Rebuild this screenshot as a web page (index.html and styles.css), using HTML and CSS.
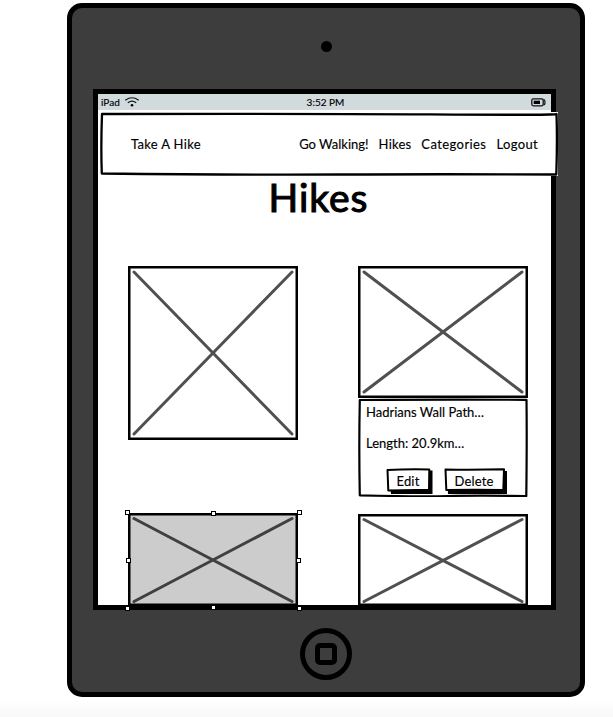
FILE: index.html
```html
<!DOCTYPE html>
<html lang="en">
<head>
<meta charset="utf-8">
<title>Take A Hike</title>
<link rel="stylesheet" href="styles.css">
</head>
<body>
<div class="tablet">
  <div class="bezel"><span class="camera"></span></div>
  <main class="screen">
    <div class="status">
      <div class="carrier"><span class="device">iPad</span>
        <svg width="14" height="10" viewBox="0 0 14 10" fill="none" stroke="#111" stroke-width="1.2" stroke-linecap="round"><path d="M.7 3Q7-1.5 13.3 3M3.2 5.5Q7 2.700 10.800 5.500"/><circle cx="7" cy="8.300" r="1.300" fill="#000" stroke="none"/></svg>
      </div>
      <span class="time">3:52 PM</span>
      <svg class="battery" width="15" height="9" viewBox="0 0 15 9"><rect x=".8" y=".8" width="11.400" height="7" rx="1.500" fill="none" stroke="#111" stroke-width="1.300"/><path d="M12.500 1.500Q14 1.700 14 4.300T12.500 7" fill="none" stroke="#111" stroke-width="1.200"/><rect x="2.700" y="2.700" width="6.300" height="3.300" fill="#000"/></svg>
    </div>
    <nav class="nav">
      <svg class="sketch" width="458" height="65" viewBox="0 0 458 65"><path d="M0 0H458V64H2Q0 64 0 62Z" fill="#fff"/><path d="M2 2Q200 1.500 330 2.400T456.500 2Q457.400 28 456.300 62.500Q340 62 240 62.500T1.800 61.500Q.8 35 2 2Z" fill="none" stroke="#000" stroke-width="2.300" stroke-linejoin="round"/></svg>
      <a class="brand">Take A Hike</a>
      <div class="links"><a class="walk">Go Walking!</a><a class="hikes">Hikes</a><a class="cats">Categories</a><a class="logout">Logout</a></div>
    </nav>
    <h1>Hikes</h1>
    <section class="gallery">
      <div class="column">
        <svg class="photo tall" width="170" height="174" viewBox="0 0 170 174"><rect class="frame" x="1.250" y="1.250" width="167.500" height="171.500"/><path class="cross" d="M6 6L164 168M164 6L6 168"/></svg>
        <div class="selected">
          <svg class="photo" width="170" height="93" viewBox="0 0 170 93"><rect class="frame fill" x="1.250" y="1.250" width="167.500" height="90.500"/><path class="cross dark" d="M6 5.500L164 88.500M164 5.500L6 88.500"/></svg>
          <i class="handle nw"></i><i class="handle n"></i><i class="handle ne"></i>
          <i class="handle w"></i><i class="handle e"></i>
          <i class="handle sw"></i><i class="handle s"></i><i class="handle se"></i>
        </div>
      </div>
      <div class="column">
        <svg class="photo" width="170" height="132" viewBox="0 0 170 132"><rect class="frame" x="1.250" y="1.250" width="167.500" height="129.500"/><path class="cross" d="M6 6L164 126M164 6L6 126"/></svg>
        <article class="card">
          <svg class="sketch" width="170" height="99" viewBox="0 0 170 99"><path d="M1.800 2Q80 1.400 168.500 1.800Q169 40 168.300 98Q120 97.300 90 98T1.800 97.300Q.8 50 1.800 2Z" fill="#fff" stroke="#000" stroke-width="2.200" stroke-linejoin="round"/></svg>
          <p class="name">Hadrians Wall Path…</p>
          <p class="length">Length: 20.9km…</p>
          <div class="actions">
            <button class="edit"><svg class="sketch" width="48" height="27" viewBox="0 0 48 27"><path d="M3 4L43 2.500H46.500V26H5Z"/><path class="face" d="M1.500 2Q22 1 43.300 1.500L43 22Q20 21.700 2.300 22.500Z"/></svg><span>Edit</span></button>
            <button class="delete"><svg class="sketch" width="64" height="27" viewBox="0 0 64 27"><path d="M3 4L60 3H63V26H4Z"/><path class="face" d="M1.500 1.500Q28 2 60 1.300L59.300 22Q30 21.500 2.300 22Z"/></svg><span>Delete</span></button>
          </div>
        </article>
        <svg class="photo last" width="170" height="92" viewBox="0 0 170 92"><rect class="frame" x="1.250" y="1.250" width="167.500" height="89.500"/><path class="cross" d="M6 5.500L164 87.500M164 5.500L6 87.500"/></svg>
      </div>
    </section>
  </main>
  <div class="home"><span></span></div>
</div>
</body>
</html>
```
FILE: styles.css
```css
* { box-sizing: border-box; }
body { margin: 0; height: 717px; overflow: hidden; padding: 3px 0 0 67px; background: linear-gradient(#fff 700px, #f8f8f8 717px); color: #000; font: 13px/16px Lato, "Liberation Sans", sans-serif; -webkit-text-stroke: .15px #000; white-space: nowrap; }
svg { display: block; flex: none; }
.tablet { width: 518px; height: 694px; border: 5px solid #000; border-radius: 15px; background: #3d3d3d; }
.bezel { height: 81px; padding: 32.5px 0 0 248.5px; }
.camera { display: block; width: 11px; height: 11px; border-radius: 50%; background: #000; }
.screen { width: 463px; height: 521px; margin-left: 21px; border: 5px solid #000; background: #fff; }
.status { display: grid; grid-template-columns: 1fr auto 1fr; align-items: center; height: 16px; padding: 0 5px 0 3px; background: #d1dadd; font-size: 10px; line-height: 14px; }
.carrier { display: flex; gap: 5px; align-items: center; }
.device, .time { padding-bottom: 1px; }
.time { position: relative; left: 2px; }
.battery { justify-self: end; }
.nav { position: relative; display: flex; justify-content: space-between; align-items: center; width: 458px; height: 65px; margin: 2px 0 0 2px; padding: 0 20px 2px 31px; }
.sketch { position: absolute; inset: 0; }
.nav a, .nav .links { position: relative; }
.brand { letter-spacing: .32px; }
.links { display: flex; gap: 10px; }
.walk { letter-spacing: 0; }
.hikes { letter-spacing: .2px; }
.cats { letter-spacing: .42px; }
.logout { letter-spacing: .35px; }
h1 { margin: -1px 0 0; padding-right: 12px; height: 78px; text-align: center; font-size: 39px; line-height: 43px; font-weight: 400; -webkit-text-stroke: 1.1px #000; letter-spacing: 1px; }
.gallery { display: flex; gap: 60px; padding-left: 30px; margin-top: 12px; }
.column { width: 170px; }
.frame { fill: #fff; stroke: #000; stroke-width: 2.5; }
.fill { fill: #ccc; }
.cross { fill: none; stroke: #505050; stroke-width: 3; stroke-linecap: round; }
.dark { stroke: #404040; }
.selected { position: relative; margin-top: 73px; }
.handle { position: absolute; width: 5px; height: 5px; border: 1px solid #000; background: #fff; }
.nw, .sw { left: -3px; }
.ne, .se { left: 169px; }
.n, .s { left: 83px; }
.w { left: -2px; }
.e { left: 168px; }
.nw, .ne { top: -3px; }
.n { top: -2px; }
.w, .e { top: 45px; }
.sw, .se { top: 93px; }
.s { top: 92px; }
.card { position: relative; height: 99px; padding: 6px 8px; }
.card p { position: relative; margin: 0 0 15px; }
.card .length { margin-bottom: 17px; }
.actions { display: flex; gap: 10px; padding-left: 20px; }
button { position: relative; height: 27px; border: 0; padding: 0 4px 1px 0; background: none; font: inherit; color: inherit; letter-spacing: .15px; -webkit-text-stroke: inherit; }
button span { position: relative; }
.edit { width: 48px; }
.delete { width: 64px; }
.face { fill: #fff; stroke: #000; stroke-width: 2; stroke-linejoin: round; }
.last { margin-top: 17px; }
.home { display: grid; place-items: center; width: 52px; height: 52px; margin: 18px 0 0 228px; border: 5px solid #000; border-radius: 50%; }
.home span { width: 22px; height: 22px; border: 5px solid #000; border-radius: 5px; }
```
